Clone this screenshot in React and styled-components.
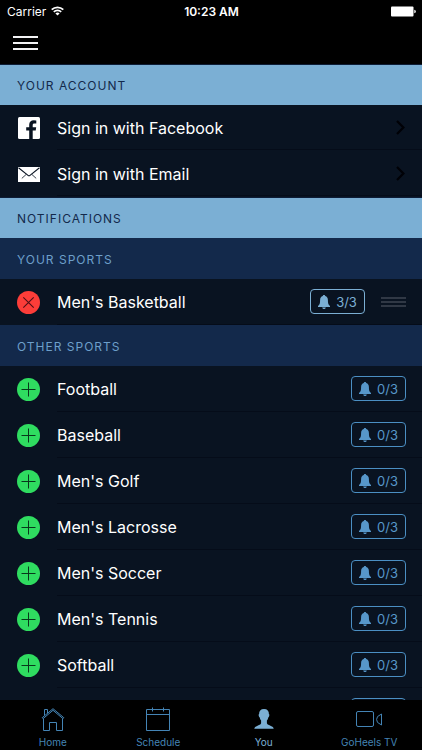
import React from "react";
import styled, { createGlobalStyle, css } from "styled-components";

const GlobalStyle = createGlobalStyle`
  * { box-sizing: border-box; }
  body {
    margin: 0;
    background: #000;
    color: #fff;
    font-family: Inter, "Liberation Sans", sans-serif;
  }
  button, a { font: inherit; color: inherit; }
`;

const Screen = styled.div`
  display: flex;
  flex-direction: column;
  height: 100vh;
  overflow: hidden;
  background: #000;
`;

const StatusBar = styled.div`
  display: grid;
  grid-template-columns: 1fr auto 1fr;
  align-items: center;
  height: 22px;
  flex: none;
  padding: 0 6px 0 7px;
  font-size: 12px;
`;

const Carrier = styled.span`
  display: flex;
  align-items: center;
  gap: 5px;
`;

const Clock = styled.time`
  font-weight: 600;
`;

const Battery = styled.svg`
  justify-self: end;
`;

const NavBar = styled.header`
  display: flex;
  align-items: center;
  height: 42px;
  flex: none;
  padding: 0 13px;
`;

const MenuButton = styled.button`
  display: flex;
  padding: 0;
  border: 0;
  background: none;
`;

const Content = styled.main`
  flex: 1;
  min-height: 0;
  overflow-y: auto;
  scrollbar-width: none;
  background: #091321;
`;

const SectionTitle = styled.h2`
  display: flex;
  align-items: center;
  height: 41px;
  margin: 0;
  padding: 0 17px;
  border-top: 1px solid #0d1c36;
  background: #7bafd4;
  color: #13294b;
  font-size: 12px;
  font-weight: 400;
  letter-spacing: 1px;
`;

const GroupTitle = styled(SectionTitle).attrs({ as: "h3" })`
  border-top-color: #13294b;
  background: #13294b;
  color: #6d9fca;
`;

const List = styled.ul`
  margin: 0;
  padding: 0;
  list-style: none;
`;

const rowLayout = css`
  display: flex;
  align-items: center;
  height: 46px;
  padding-left: 17px;
`;

const Row = styled.li`
  ${rowLayout}
`;

const RowBody = styled.div`
  display: flex;
  align-items: center;
  flex: 1;
  height: 100%;
  margin-left: 17px;
  padding-right: ${(p) => (p.$link ? "17px" : "16px")};
  border-bottom: 1px solid #050c19;
  font-size: 16px;
`;

const SignInButton = styled.button`
  ${rowLayout}
  width: 100%;
  padding-right: 0;
  border: 0;
  background: none;
  text-align: left;
`;

const RowLabel = styled.span`
  flex: 1;
`;

const RoundButton = styled.button`
  display: flex;
  flex: none;
  width: 23px;
  height: 23px;
  padding: 0;
  border: 0;
  border-radius: 50%;
  background: ${(p) => (p.$remove ? "#fc3d39" : "#2fdc60")};
`;

const AlertButton = styled.button`
  display: flex;
  align-items: center;
  justify-content: center;
  gap: 6px;
  width: 55px;
  height: 25px;
  padding: 0;
  border: 1px solid ${(p) => (p.$active ? "#7bafd4" : "#4b8fc3")};
  border-radius: 4px;
  background: none;
  color: ${(p) => (p.$active ? "#7bafd4" : "#5797ca")};
  font-size: 13px;
`;

const DragHandle = styled.button`
  display: flex;
  margin-left: 16px;
  padding: 0;
  border: 0;
  background: none;
`;

const TabBar = styled.nav`
  display: flex;
  flex: none;
  height: 50px;
  background: #000;
`;

const Tab = styled.a`
  display: flex;
  flex: 1;
  flex-direction: column;
  align-items: center;
  gap: 5px;
  padding-top: 7px;
  color: ${(p) => (p.$active ? "#7bafd4" : "#4484b5")};
  font-size: 10px;
  line-height: 12px;
  text-decoration: none;
`;

const WifiIcon = () => (
  <svg width="13" height="10" viewBox="0 0 13 10" fill="none" stroke="#fff" strokeWidth="1.7" aria-hidden="true">
    <path d="M0.7 3.7a8.2 8.2 0 0 1 11.6 0" />
    <path d="M2.8 5.9a5.2 5.2 0 0 1 7.4 0" />
    <path d="M6.5 9.6 4.4 7.5a3 3 0 0 1 4.2 0z" fill="#fff" stroke="none" />
  </svg>
);

const MenuIcon = () => (
  <svg width="25" height="16" viewBox="0 0 25 16" fill="#f2f2f4" aria-hidden="true">
    <rect y="1" width="25" height="2" />
    <rect y="7" width="25" height="2" />
    <rect y="13" width="25" height="2" />
  </svg>
);

const FacebookIcon = () => (
  <svg width="23" height="22" viewBox="0 0 23 22" aria-hidden="true">
    <rect x="1" width="22" height="22" rx="1.5" fill="#fff" />
    <path d="M12.2 22v-8.5h-3v-3.3h3V7.8c0-3 1.8-4.6 4.5-4.6l2.6.2v3h-1.8c-1.400 0-1.800.7-1.800 1.700v2.100h3.500l-.5 3.300h-3V22z" fill="#091321" />
  </svg>
);

const MailIcon = () => (
  <svg width="23" height="15" viewBox="0 0 23 15" fill="none" stroke="#091321" aria-hidden="true">
    <rect x="1" width="22" height="15" fill="#fff" stroke="none" />
    <path d="M1.5 0.7 11 8.4q1 .8 2 0L22.5.7" strokeWidth="1.1" />
    <path d="m9.2 7.4-4.4 4M14.8 7.4l4.4 4" strokeWidth="0.8" />
  </svg>
);

const ChevronIcon = () => (
  <svg width="9" height="15" viewBox="0 0 9 15" fill="none" stroke="#000106" strokeWidth="2.2" aria-hidden="true">
    <path d="m1 1 6.400 6.500L1 14" />
  </svg>
);

const PlusIcon = () => (
  <svg width="23" height="23" viewBox="0 0 23 23" fill="none" stroke="#08371b" strokeWidth="1" aria-hidden="true">
    <path d="M4.5 11.5h14M11.5 4.5v14" />
  </svg>
);

const CrossIcon = () => (
  <svg width="23" height="23" viewBox="0 0 23 23" fill="none" stroke="#510f17" strokeWidth="1.1" aria-hidden="true">
    <path d="m6.3 6.3 10.4 10.4M16.7 6.3 6.3 16.7" />
  </svg>
);

const BellIcon = () => (
  <svg width="12" height="14" viewBox="0 0 12 14" fill="currentColor" aria-hidden="true">
    <path d="M6 0c.8 0 1.2.5 1.2 1.1C9 1.6 9.9 3 9.9 5c0 3.5.5 4.9 2.1 6v.9H0V11c1.6-1.1 2.1-2.5 2.1-6 0-2 .9-3.4 2.7-3.9C4.8.5 5.2 0 6 0z" />
    <path d="M4.2 12.4h3.6C7.5 13.4 6.9 14 6 14s-1.5-.6-1.8-1.6z" />
  </svg>
);

const HandleIcon = () => (
  <svg width="25" height="10" viewBox="0 0 25 10" fill="#303845" aria-hidden="true">
    <rect width="25" height="2" />
    <rect y="4" width="25" height="2" />
    <rect y="8" width="25" height="2" />
  </svg>
);

const HomeIcon = () => (
  <svg width="24" height="24" viewBox="0 0 24 24" fill="none" stroke="currentColor" strokeWidth="1" aria-hidden="true">
    <path d="m1.2 10.7 10.8-9 10.800 9-.8 1-10-8.400-10 8.400z" />
    <path d="M3.5 8.5v-6h3V6M2.500 11.800v11.700h6v-8h7v8h6V11.800" />
  </svg>
);

const CalendarIcon = () => (
  <svg width="24" height="24" viewBox="0 0 24 24" fill="none" stroke="currentColor" strokeWidth="1" aria-hidden="true">
    <path d="M.5 2.5h23v21H.5zM.5 7.500h23M6.500.5v4M17.500.5v4" />
  </svg>
);

const PersonIcon = () => (
  <svg width="24" height="24" viewBox="0 0 24 24" fill="currentColor" aria-hidden="true">
    <path d="M12 2c3.4 0 5 2 4.9 5 .5.2.6 1.2.2 2.2-.2.5-.4.9-.7 1-.3 1.5-.9 2.6-1.5 3.4v2.7c.4 1.4 2.2 1.9 4 2.6 1.6.6 2.6 1.200 2.800 2.900H2.300c.2-1.700 1.200-2.300 2.800-2.900 1.800-.7 3.600-1.200 4-2.600v-2.700c-.6-.8-1.200-1.900-1.500-3.400-.3-.1-.5-.5-.7-1-.4-1-.3-2 .2-2.200C7 4 8.600 2 12 2z" />
  </svg>
);

const VideoIcon = () => (
  <svg width="26" height="24" viewBox="0 0 26 24" fill="none" stroke="currentColor" strokeWidth="1" aria-hidden="true">
    <rect x=".5" y="4.5" width="17" height="15" rx="1.5" />
    <path d="M25.500 7v11l-4-2.600q-1.800-2.900 0-5.800z" />
  </svg>
);

const signInOptions = [
  { label: "Sign in with Facebook", Icon: FacebookIcon },
  { label: "Sign in with Email", Icon: MailIcon },
];

const otherSports = [
  "Football",
  "Baseball",
  "Men's Golf",
  "Men's Lacrosse",
  "Men's Soccer",
  "Men's Tennis",
  "Softball",
  "Volleyball",
];

const tabs = [
  { label: "Home", Icon: HomeIcon },
  { label: "Schedule", Icon: CalendarIcon },
  { label: "You", Icon: PersonIcon, active: true },
  { label: "GoHeels TV", Icon: VideoIcon },
];

function SportRow({ name, followed, alerts }) {
  return (
    <Row>
      <RoundButton type="button" $remove={followed} aria-label={`${followed ? "Remove" : "Add"} ${name}`}>
        {followed ? <CrossIcon /> : <PlusIcon />}
      </RoundButton>
      <RowBody>
        <RowLabel>{name}</RowLabel>
        <AlertButton type="button" $active={followed}>
          <BellIcon />
          {alerts}/3
        </AlertButton>
        {followed && (
          <DragHandle type="button" aria-label={`Reorder ${name}`}>
            <HandleIcon />
          </DragHandle>
        )}
      </RowBody>
    </Row>
  );
}

export default function App() {
  return (
    <>
      <GlobalStyle />
      <Screen>
        <StatusBar>
          <Carrier>
            Carrier
            <WifiIcon />
          </Carrier>
          <Clock>10:23 AM</Clock>
          <Battery width="25" height="11" viewBox="0 0 25 11" fill="#fff" aria-hidden="true">
            <rect y=".5" width="22.5" height="10" rx="1" />
            <path d="M23.3 3.8q1.5.2 1.5 1.7t-1.5 1.7z" />
          </Battery>
        </StatusBar>
        <NavBar>
          <MenuButton type="button" aria-label="Menu">
            <MenuIcon />
          </MenuButton>
        </NavBar>
        <Content>
          <SectionTitle>YOUR ACCOUNT</SectionTitle>
          <List>
            {signInOptions.map(({ label, Icon }) => (
              <li key={label}>
                <SignInButton type="button">
                  <Icon />
                  <RowBody $link>
                    <RowLabel>{label}</RowLabel>
                    <ChevronIcon />
                  </RowBody>
                </SignInButton>
              </li>
            ))}
          </List>
          <SectionTitle>NOTIFICATIONS</SectionTitle>
          <GroupTitle>YOUR SPORTS</GroupTitle>
          <List>
            <SportRow name="Men's Basketball" followed alerts={3} />
          </List>
          <GroupTitle>OTHER SPORTS</GroupTitle>
          <List>
            {otherSports.map((name) => (
              <SportRow key={name} name={name} alerts={0} />
            ))}
          </List>
        </Content>
        <TabBar>
          {tabs.map(({ label, Icon, active }) => (
            <Tab key={label} href="#" $active={active} aria-current={active ? "page" : undefined}>
              <Icon />
              {label}
            </Tab>
          ))}
        </TabBar>
      </Screen>
    </>
  );
}
